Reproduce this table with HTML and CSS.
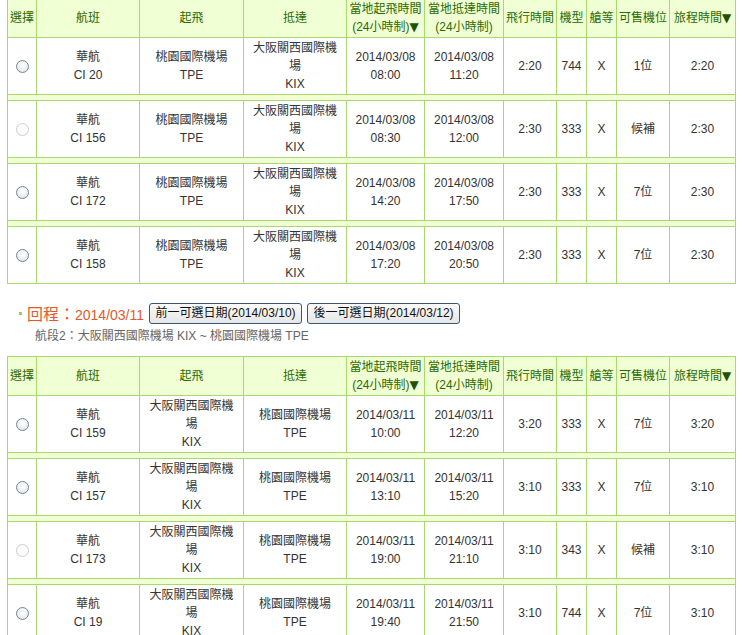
FILE: index.html
```html
<!DOCTYPE html>
<html lang="zh-Hant">
<head>
<meta charset="utf-8">
<title>航班</title>
<link rel="stylesheet" href="styles.css">
</head>
<body>
<div class="page">
  <table class="flights first">
    <colgroup>
      <col class="c-sel"><col class="c-fl"><col class="c-dep"><col class="c-arr"><col class="c-t1"><col class="c-t2"><col class="c-dur"><col class="c-type"><col class="c-cls"><col class="c-seat"><col class="c-trip">
    </colgroup>
    <tr>
      <th>選擇</th><th>航班</th><th>起飛</th><th>抵達</th>
      <th>當地起飛時間<br>(24小時制)<span class="arrow">▼</span></th>
      <th>當地抵達時間<br>(24小時制)</th>
      <th>飛行時間</th><th>機型</th><th>艙等</th><th>可售機位</th><th>旅程時間<span class="arrow">▼</span></th>
    </tr>
    <tr>
      <td><span class="radio"></span></td>
      <td>華航<br>CI 20</td>
      <td>桃園國際機場<br>TPE</td>
      <td>大阪關西國際機場<br>KIX</td>
      <td>2014/03/08<br>08:00</td>
      <td>2014/03/08<br>11:20</td>
      <td>2:20</td><td>744</td><td>X</td><td>1位</td><td>2:20</td>
    </tr>
    <tr class="sep"><td colspan="11"></td></tr>
    <tr>
      <td><span class="radio disabled"></span></td>
      <td>華航<br>CI 156</td>
      <td>桃園國際機場<br>TPE</td>
      <td>大阪關西國際機場<br>KIX</td>
      <td>2014/03/08<br>08:30</td>
      <td>2014/03/08<br>12:00</td>
      <td>2:30</td><td>333</td><td>X</td><td>候補</td><td>2:30</td>
    </tr>
    <tr class="sep"><td colspan="11"></td></tr>
    <tr>
      <td><span class="radio"></span></td>
      <td>華航<br>CI 172</td>
      <td>桃園國際機場<br>TPE</td>
      <td>大阪關西國際機場<br>KIX</td>
      <td>2014/03/08<br>14:20</td>
      <td>2014/03/08<br>17:50</td>
      <td>2:30</td><td>333</td><td>X</td><td>7位</td><td>2:30</td>
    </tr>
    <tr class="sep"><td colspan="11"></td></tr>
    <tr>
      <td><span class="radio"></span></td>
      <td>華航<br>CI 158</td>
      <td>桃園國際機場<br>TPE</td>
      <td>大阪關西國際機場<br>KIX</td>
      <td>2014/03/08<br>17:20</td>
      <td>2014/03/08<br>20:50</td>
      <td>2:30</td><td>333</td><td>X</td><td>7位</td><td>2:30</td>
    </tr>
  </table>

  <div class="return-head">
    <span class="bullet"></span>
    <span class="title">回程：<span class="title-date">2014/03/11</span></span>
    <button class="date-btn" type="button">前一可選日期(2014/03/10)</button>
    <button class="date-btn" type="button">後一可選日期(2014/03/12)</button>
  </div>
  <div class="segment">航段2：大阪關西國際機場 KIX ~ 桃園國際機場 TPE</div>

  <table class="flights second">
    <colgroup>
      <col class="c-sel"><col class="c-fl"><col class="c-dep"><col class="c-arr"><col class="c-t1"><col class="c-t2"><col class="c-dur"><col class="c-type"><col class="c-cls"><col class="c-seat"><col class="c-trip">
    </colgroup>
    <tr>
      <th>選擇</th><th>航班</th><th>起飛</th><th>抵達</th>
      <th>當地起飛時間<br>(24小時制)<span class="arrow">▼</span></th>
      <th>當地抵達時間<br>(24小時制)</th>
      <th>飛行時間</th><th>機型</th><th>艙等</th><th>可售機位</th><th>旅程時間<span class="arrow">▼</span></th>
    </tr>
    <tr>
      <td><span class="radio"></span></td>
      <td>華航<br>CI 159</td>
      <td>大阪關西國際機場<br>KIX</td>
      <td>桃園國際機場<br>TPE</td>
      <td>2014/03/11<br>10:00</td>
      <td>2014/03/11<br>12:20</td>
      <td>3:20</td><td>333</td><td>X</td><td>7位</td><td>3:20</td>
    </tr>
    <tr class="sep"><td colspan="11"></td></tr>
    <tr>
      <td><span class="radio"></span></td>
      <td>華航<br>CI 157</td>
      <td>大阪關西國際機場<br>KIX</td>
      <td>桃園國際機場<br>TPE</td>
      <td>2014/03/11<br>13:10</td>
      <td>2014/03/11<br>15:20</td>
      <td>3:10</td><td>333</td><td>X</td><td>7位</td><td>3:10</td>
    </tr>
    <tr class="sep"><td colspan="11"></td></tr>
    <tr>
      <td><span class="radio disabled"></span></td>
      <td>華航<br>CI 173</td>
      <td>大阪關西國際機場<br>KIX</td>
      <td>桃園國際機場<br>TPE</td>
      <td>2014/03/11<br>19:00</td>
      <td>2014/03/11<br>21:10</td>
      <td>3:10</td><td>343</td><td>X</td><td>候補</td><td>3:10</td>
    </tr>
    <tr class="sep"><td colspan="11"></td></tr>
    <tr>
      <td><span class="radio"></span></td>
      <td>華航<br>CI 19</td>
      <td>大阪關西國際機場<br>KIX</td>
      <td>桃園國際機場<br>TPE</td>
      <td>2014/03/11<br>19:40</td>
      <td>2014/03/11<br>21:50</td>
      <td>3:10</td><td>744</td><td>X</td><td>7位</td><td>3:10</td>
    </tr>
  </table>
</div>
</body>
</html>
```

FILE: styles.css
```css
html, body {
  margin: 0;
  padding: 0;
  background: #ffffff;
}

body {
  font-family: "Liberation Sans", "Noto Sans CJK TC", sans-serif;
  font-size: 12px;
  color: #333333;
}

.page {
  padding-left: 7px;
}

.flights {
  border-collapse: collapse;
  table-layout: fixed;
  width: 728px;
}

.flights.first {
  margin-top: -2px;
}

.c-sel { width: 29px; }
.c-fl { width: 103px; }
.c-dep { width: 104px; }
.c-arr { width: 103px; }
.c-t1 { width: 78px; }
.c-t2 { width: 79px; }
.c-dur { width: 53px; }
.c-type { width: 30px; }
.c-cls { width: 30px; }
.c-seat { width: 53px; }
.c-trip { width: 66px; }

.flights th,
.flights td {
  border: 1px solid #a8d96c;
  text-align: center;
  vertical-align: middle;
  line-height: 18px;
  padding: 1px 4px;
}

.flights th {
  background: #f0ffd4;
  color: #2c6a00;
  font-weight: normal;
  white-space: nowrap;
  padding: 1px 0;
}

.arrow {
  font-family: "DejaVu Sans", sans-serif;
  font-size: 12px;
  color: #1f5200;
}

.flights .sep td {
  background: #f0ffd4;
  height: 5px;
  padding: 0;
  line-height: 0;
  font-size: 0;
}

.radio {
  display: inline-block;
  width: 11px;
  height: 11px;
  border: 1px solid #73869d;
  border-radius: 50%;
  background: radial-gradient(circle at 50% 40%, #ffffff 0%, #f2f2f2 45%, #d6dbe1 100%);
  vertical-align: middle;
}

.radio.disabled {
  border-color: #cfcfcf;
  background: #fbfbfb;
}

.return-head {
  display: flex;
  align-items: center;
  margin-top: 18px;
  height: 22px;
  padding-left: 12px;
}

.bullet {
  width: 3px;
  height: 3px;
  background: #9ccc5a;
  margin-right: 5px;
}

.title {
  color: #e25a2a;
  font-size: 16px;
  margin-right: 5px;
}

.title-date {
  font-size: 14px;
}

.date-btn {
  font-family: "Liberation Sans", "Noto Sans CJK TC", sans-serif;
  font-size: 12px;
  color: #111111;
  height: 21px;
  width: 153px;
  padding: 0;
  margin-right: 5px;
  border: 1px solid #3a5576;
  border-radius: 3px;
  background: linear-gradient(#fafafa, #e6e6e6);
  line-height: 18px;
}

.segment {
  padding-left: 28px;
  margin-top: 3px;
  line-height: 18px;
  color: #666666;
}

.flights.second {
  margin-top: 11px;
}
```
